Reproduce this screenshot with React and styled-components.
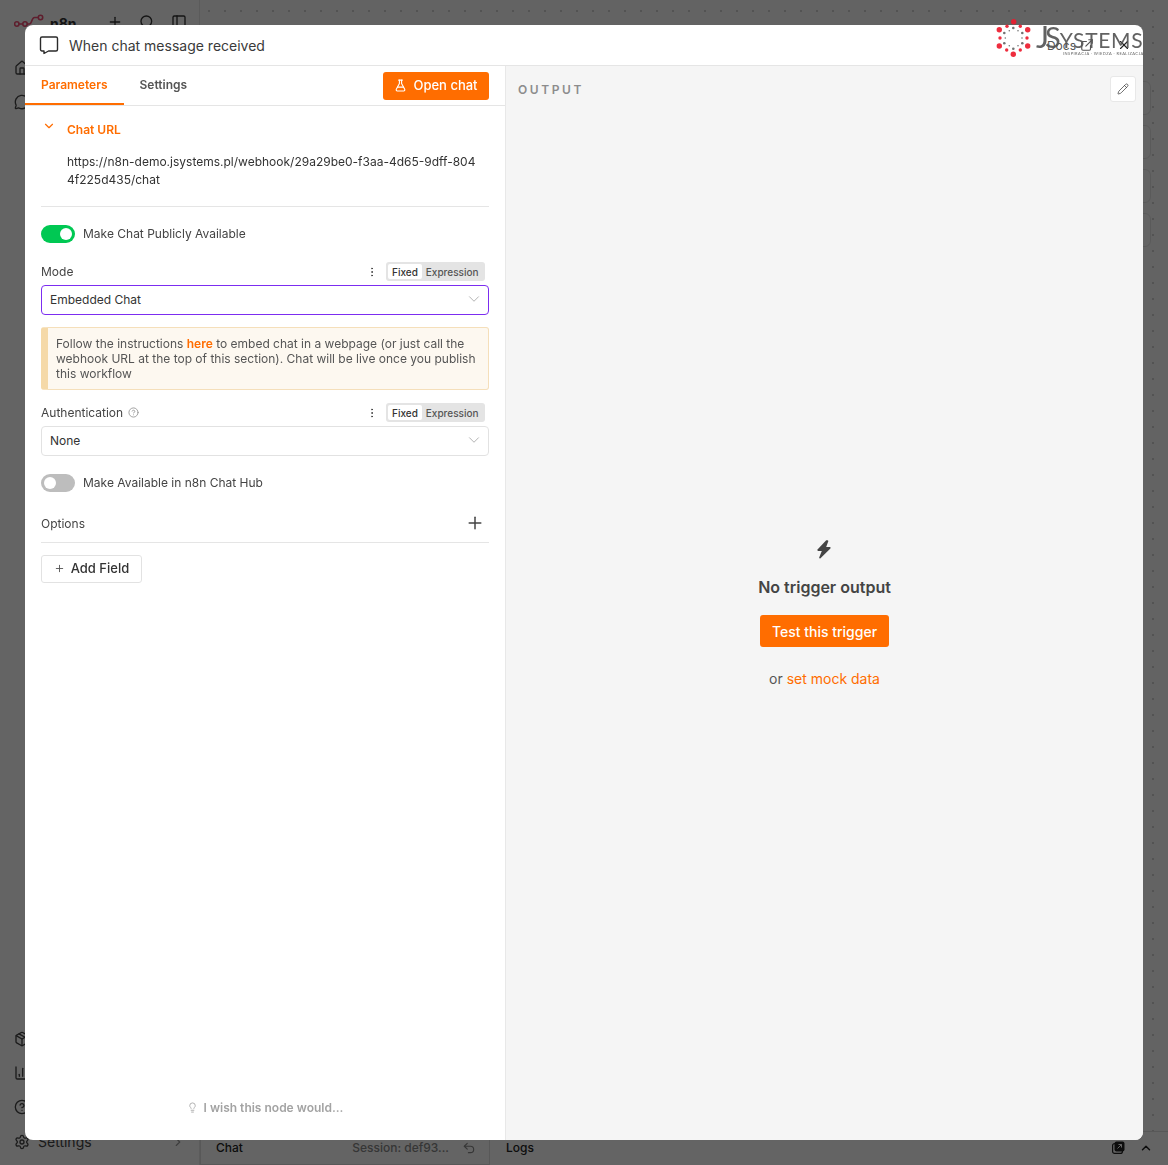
import React from "react";
import styled, { createGlobalStyle } from "styled-components";
import {
  House, MessageCircle, Plus, Search, PanelLeft, Package, ChartColumn, CircleHelp, Settings,
  ChevronRight, ChevronDown, ChevronUp, Undo2, FlaskConical, EllipsisVertical,
  Pencil, Lightbulb, X, ExternalLink
} from "lucide-react";

const Global = createGlobalStyle`
  * { box-sizing: border-box; }
  html, body { margin: 0; height: 100%; }
  body { font-family: Inter, "Noto Sans", sans-serif; color: #222; background: #fafafa; overflow: hidden; }
`;

const Page = styled.div`display: grid; grid-template-columns: 200px 1fr; height: 1165px; overflow: hidden;`;
const Sidebar = styled.aside`display: flex; flex-direction: column; justify-content: space-between; border-right: 1px solid #e4e4e4; padding: 12px 8px 15px 14px;`;
const SideTop = styled.div`display: flex; flex-direction: column;`;
const Brand = styled.div`display: flex; align-items: center; height: 20px; color: #333; margin-bottom: 28px;`;
const BrandName = styled.span`font-size: 14px; font-weight: 700; margin-left: 6px; flex: 1; position: relative; top: 1px;`;
const BrandTools = styled.div`display: flex; gap: 16px; margin-right: 4px; color: #333;`;
const NavList = styled.nav`display: flex; flex-direction: column; gap: 18px; color: #444;`;
const SideBottom = styled.div`display: flex; flex-direction: column; gap: 18px; color: #444;`;
const SettingsRow = styled.div`display: flex; align-items: center; gap: 8px; font-size: 14px; padding-right: 6px;`;
const Grow = styled.span`flex: 1;`;

const Main = styled.main`display: flex; flex-direction: column; min-width: 0;`;
const Canvas = styled.div`
  flex: 1; display: flex; flex-direction: column; align-items: flex-end; gap: 10px; padding: 81px 17px 0 0;
  background-color: #f8f8f8; background-image: radial-gradient(circle, #d0d0d0 1px, transparent 1.2px);
  background-size: 16px 16px; background-position: 1px 3px;
`;
const CanvasTool = styled.div`width: 34px; height: 34px; border: 1px solid #e2e2e2; border-radius: 6px; background: #fafafa;`;
const BottomBar = styled.footer`display: flex; height: 34px; border-top: 1px solid #dcdcdc; background: #fafafa; align-items: stretch;`;
const ChatPane = styled.div`
  width: 290px; display: flex; align-items: center; padding: 0 13px 1px 15px; font-size: 12px; font-weight: 500;
  border-left: 1px solid #dcdcdc; border-right: 1px solid #dcdcdc; border-bottom: 1px solid #dcdcdc; gap: 13px;
`;
const Session = styled.span`margin-left: auto; color: #888; font-weight: 500; white-space: nowrap;`;
const LogsPane = styled.div`flex: 1; display: flex; align-items: center; font-size: 12px; font-weight: 500; padding: 0 15px 2px 16px; gap: 14px;`;

const Overlay = styled.div`position: fixed; inset: 0; background: rgba(0,0,0,.6);`;
const Modal = styled.section`
  position: fixed; left: 25px; top: 25px; width: 1118px; height: 1115px; background: #fff; border-radius: 8px;
  overflow: hidden; display: flex; flex-direction: column;
`;
const ModalHeader = styled.header`height: 41px; flex: none; display: flex; align-items: center; border-bottom: 1px solid #e5e5e5; padding: 0 12px 0 14px;`;
const ModalTitle = styled.h2`margin: 0 0 0 10px; font-size: 14px; font-weight: 400; color: #3a3a3a; flex: 1;`;
const DocsLink = styled.a`display: flex; align-items: center; gap: 4px; font-size: 12px; color: #555; margin-right: 23px;`;
const CloseBtn = styled.span`display: flex; color: #222;`;

const Panes = styled.div`flex: 1; display: flex; min-height: 0;`;
const LeftPane = styled.div`width: 481px; flex: none; display: flex; flex-direction: column; border-right: 1px solid #e8e8e8; padding-bottom: 25px;`;
const RightPane = styled.div`flex: 1; background: #f5f5f5; display: flex; flex-direction: column; position: relative;`;

const TabRow = styled.div`height: 40px; flex: none; display: flex; align-items: stretch; border-bottom: 1px solid #e5e5e5; padding-right: 16px;`;
const Tab = styled.div`
  display: flex; align-items: center; padding: 0 16px; font-size: 12px; font-weight: 600; padding-bottom: 2px;
  color: ${p => (p.$active ? "#ff6d00" : "#555")};
  box-shadow: ${p => (p.$active ? "inset 0 -2px 0 #ff6d00" : "none")};
`;
const OpenChat = styled.button`
  margin-left: auto; align-self: flex-start; margin-top: 6px; height: 28px; width: 106px; border: 0; border-radius: 3px; padding: 0 0 2px;
  background: #ff6d00; color: #fff; font: 500 13px Inter, sans-serif; display: flex; align-items: center; justify-content: center; gap: 6px;
`;
const Form = styled.div`flex: 1; display: flex; flex-direction: column; padding: 0 16px;`;
const CollapseHead = styled.div`display: flex; align-items: flex-start; margin-top: 13px; color: #ff6d00; font-size: 12px; font-weight: 500;`;
const CollapseIcon = styled.span`display: flex; margin: 0 11px 0 1px; height: 14px;`;
const CollapseTitle = styled.span`margin-top: 3px; font-weight: 600;`;
const UrlText = styled.div`margin: 16px 12px 0 26px; font-size: 12px; line-height: 18px; color: #333; word-break: break-all; height: 36px;`;
const Divider = styled.hr`border: 0; border-top: 1px solid #e5e5e5; margin: ${p => p.$m || "0"}; width: 100%;`;
const SwitchRow = styled.div`display: flex; align-items: center; gap: 8px; font-size: 12px; color: #444; margin-top: ${p => p.$mt}px;`;
const SwitchLabel = styled.span`position: relative; top: -1px;`;
const Track = styled.span`
  width: 34px; height: 18px; border-radius: 9px; padding: 3px; display: flex;
  justify-content: ${p => (p.$on ? "flex-end" : "flex-start")};
  background: ${p => (p.$on ? "#00c853" : "#bdbdbd")};
`;
const Knob = styled.span`width: 12px; height: 12px; border-radius: 50%; background: #fff;`;
const LabelRow = styled.div`display: flex; align-items: center; height: 19px; margin-top: ${p => p.$mt}px; font-size: 12px; color: #444; gap: 5px;`;
const LabelActions = styled.div`margin-left: auto; margin-right: 4px; display: flex; align-items: center; gap: 8px; color: #444;`;
const Segment = styled.div`display: flex; padding: 2px; background: #e4e4e4; border-radius: 3px; font-size: 10px; height: 19px; align-items: stretch; width: 99px;`;
const SegOption = styled.span`
  display: flex; align-items: center; padding: ${p => (p.$active ? "0 4px" : "0 0 0 4px")}; border-radius: 2px; color: ${p => (p.$active ? "#333" : "#555")};
  background: ${p => (p.$active ? "#fff" : "transparent")}; font-weight: 500;
`;
const Select = styled.div`
  height: 30px; margin-top: ${p => p.$mt}px; display: flex; align-items: center; justify-content: space-between; padding: 0 5px 2px 8px;
  border-radius: 4px; font-size: 12px; color: #333; background: #fff;
  border: 1px solid ${p => (p.$focus ? "#7c2df0" : "#e2e2e2")};
`;
const Notice = styled.div`
  margin-top: 12px; height: 63px; border: 1px solid #f5dfba; border-left: 7px solid #f5d9a8; background: #fdf8f0; border-radius: 3px;
  padding: 8px 8px 0 8px; font-size: 12px; line-height: 15px; color: #555;
`;
const NoticeLink = styled.a`color: #ff6d00; font-weight: 600;`;
const OptionsRow = styled.div`display: flex; align-items: center; justify-content: space-between; margin-top: 22px; font-size: 12px; color: #444; padding-right: 4px; height: 18px;`;
const AddField = styled.button`
  align-self: flex-start; margin-top: 12px; height: 28px; width: 101px; border: 1px solid #e2e2e2; border-radius: 3px; background: #fff; padding: 0 0 2px;
  display: flex; align-items: center; justify-content: center; gap: 6px; font: 500 13px Inter, sans-serif; color: #333;
`;
const Wish = styled.div`margin-top: auto; display: flex; align-items: center; justify-content: center; gap: 3px; font-size: 12px; font-weight: 600; color: #a3a3a3;`;

const OutputHead = styled.div`padding: 16px 12px 0 12px; font-size: 12px; font-weight: 600; letter-spacing: 2.6px; color: #8c8c8c; line-height: 15px;`;
const EditBtn = styled.button`
  position: absolute; top: 10px; right: 7px; width: 26px; height: 26px; border: 1px solid #e8e8e8; border-radius: 3px; background: #fff;
  display: flex; align-items: center; justify-content: center; padding: 0; color: #333;
`;
const Empty = styled.div`flex: 1; display: flex; flex-direction: column; align-items: center; padding-top: 443px;`;
const EmptyTitle = styled.div`margin-top: 18px; font-size: 16px; font-weight: 600; color: #444; line-height: 20px;`;
const TestBtn = styled.button`
  margin-top: 18px; width: 129px; height: 32px; border: 0; border-radius: 3px; background: #ff6d00; color: #fff; font: 500 14px Inter, sans-serif;
`;
const MockLine = styled.div`margin-top: 23px; font-size: 14px; color: #555; line-height: 17px;`;
const MockLink = styled.a`color: #ff6d00;`;
const BoltSvg = styled.svg`margin-right: 1px; flex: none;`;

const Logo = styled.div`position: fixed; left: 995px; top: 18px; width: 148px; height: 42px; overflow: hidden; opacity: .92; pointer-events: none; display: flex;`;
const LogoMark = styled.svg`width: 38px; height: 42px; flex: none;`;
const LogoText = styled.div`margin-left: 3px; display: flex; flex-direction: column; flex: 1; white-space: nowrap; color: #555;`;
const LogoWord = styled.div`display: flex; align-items: baseline; height: 34px; font-family: Lato, sans-serif; font-weight: 400;`;
const LogoJ = styled.span`font-size: 31px; line-height: 34px; margin-top: 1px; width: 9px;`;
const LogoS = styled.span`font-size: 29px; line-height: 34px; margin-right: -1px;`;
const LogoRest = styled.span`font-size: 21px; line-height: 34px; letter-spacing: .7px;`;
const LogoTag = styled.div`font-size: 4px; line-height: 5px; margin: -1px 0 0 27px; letter-spacing: .45px; font-family: Lato, sans-serif; font-weight: 400;`;

const ChatBubble = () => (
  <svg width="20" height="20" viewBox="0 0 20 20" fill="none" stroke="#2a2a2a" strokeWidth="1.4" strokeLinejoin="round">
    <path d="M3 2h14a1.5 1.5 0 0 1 1.5 1.5v11a1.5 1.5 0 0 1-1.5 1.5H9.5L5 18.5V16H3a1.5 1.5 0 0 1-1.5-1.5v-11A1.5 1.5 0 0 1 3 2z" />
  </svg>
);
const Bolt = () => (
  <BoltSvg width="16" height="19" viewBox="0 0 16 19" fill="#444">
    <path d="M10 .5 1.5 9.5c-.5.6-.1 1.5.7 1.5h3.6l-2.6 6.6c-.2.8.7 1.3 1.3.7l9.9-9.8c.5-.6.2-1.5-.7-1.5h-3.5l2.1-5.7C12.6.3 10.8-.3 10 .5z" />
  </BoltSvg>
);
const N8nMark = () => (
  <svg width="30" height="16" viewBox="0 0 30 16" fill="none" stroke="#ea4b71" strokeWidth="1.6">
    <circle cx="2.8" cy="10" r="2.2" /><circle cx="11" cy="10" r="2.2" /><circle cx="26.5" cy="3.5" r="2.2" /><circle cx="26.5" cy="15" r="2.2" />
    <path d="M5 10h3.8M13.2 10h2.3c2.5 0 2-6.5 5-6.5h3.8" />
  </svg>
);
const PopOut = () => (
  <svg width="13" height="13" viewBox="0 0 13 13">
    <rect x=".6" y="2.6" width="9.8" height="9.8" rx="2" fill="none" stroke="#222" strokeWidth="1.2" />
    <rect x="2.5" y=".5" width="10" height="10" rx="2" fill="#222" />
    <path d="M5.5 7.5 9.5 3.5M6.5 3.5h3v3" fill="none" stroke="#fafafa" strokeWidth="1" />
  </svg>
);
const big = [[18.7,3.7],[18.3,36.3],[4.3,11.7],[32.7,11.7],[4.3,28],[32.7,28]];
const small = [[12,8.3],[25.3,8.3],[5,20],[32,20],[11.7,32],[25.3,32]];
const gray = [[18.3,10],[9.3,15],[27.3,15],[9.3,25.3],[27.3,25.3],[18.3,30.7]];
const tiny = [[14.3,12.7],[23,12.7],[10.3,20],[27,20],[14.3,27.7],[23,27.7]];

const Field = ({ label, help, mt }) => (
  <LabelRow $mt={mt}>
    {label}
    {help && <CircleHelp size={11} color="#999" />}
    <LabelActions>
      <EllipsisVertical size={12} />
      <Segment><SegOption $active>Fixed</SegOption><SegOption>Expression</SegOption></Segment>
    </LabelActions>
  </LabelRow>
);

export default function App() {
  return (
    <>
      <Global />
      <Page>
        <Sidebar>
          <SideTop>
            <Brand>
              <N8nMark />
              <BrandName>n8n</BrandName>
              <BrandTools><Plus size={16} /><Search size={16} /><PanelLeft size={16} /></BrandTools>
            </Brand>
            <NavList><House size={16} /><MessageCircle size={16} /></NavList>
          </SideTop>
          <SideBottom>
            <Package size={16} />
            <ChartColumn size={16} />
            <CircleHelp size={16} />
            <SettingsRow><Settings size={16} />Settings<Grow /><ChevronRight size={14} color="#999" /></SettingsRow>
          </SideBottom>
        </Sidebar>
        <Main>
          <Canvas><CanvasTool /><CanvasTool /><CanvasTool /><CanvasTool /></Canvas>
          <BottomBar>
            <ChatPane>Chat<Session>Session: def93...</Session><Undo2 size={14} color="#888" /></ChatPane>
            <LogsPane>Logs<Grow /><PopOut /><ChevronUp size={14} strokeWidth={2.5} /></LogsPane>
          </BottomBar>
        </Main>
      </Page>
      <Overlay />
      <Modal>
        <ModalHeader>
          <ChatBubble />
          <ModalTitle>When chat message received</ModalTitle>
          <DocsLink>Docs <ExternalLink size={14} /></DocsLink>
          <CloseBtn><X size={14} /></CloseBtn>
        </ModalHeader>
        <Panes>
          <LeftPane>
            <TabRow>
              <Tab $active>Parameters</Tab>
              <Tab>Settings</Tab>
              <OpenChat><FlaskConical size={13} />Open chat</OpenChat>
            </TabRow>
            <Form>
              <CollapseHead>
                <CollapseIcon><ChevronDown size={14} strokeWidth={2} /></CollapseIcon>
                <CollapseTitle>Chat URL</CollapseTitle>
              </CollapseHead>
              <UrlText>https://n8n-demo.jsystems.pl/webhook/29a29be0-f3aa-4d65-9dff-8044f225d435/chat</UrlText>
              <Divider $m="17px 0 0" />
              <SwitchRow $mt={18}><Track $on><Knob /></Track><SwitchLabel>Make Chat Publicly Available</SwitchLabel></SwitchRow>
              <Field label="Mode" mt={19} />
              <Select $focus $mt={4}>Embedded Chat<ChevronDown size={18} color="#aaa" strokeWidth={1.2} /></Select>
              <Notice>
                Follow the instructions <NoticeLink>here</NoticeLink> to embed chat in a webpage (or just call the webhook URL at the top of this section). Chat will be live once you publish this workflow
              </Notice>
              <Field label="Authentication" help mt={13} />
              <Select $mt={4}>None<ChevronDown size={18} color="#aaa" strokeWidth={1.2} /></Select>
              <SwitchRow $mt={18}><Track><Knob /></Track><SwitchLabel>Make Available in n8n Chat Hub</SwitchLabel></SwitchRow>
              <OptionsRow>Options<Plus size={20} color="#444" strokeWidth={1.8} /></OptionsRow>
              <Divider $m="10px 0 0" />
              <AddField><Plus size={11} color="#555" />Add Field</AddField>
              <Wish><Lightbulb size={11} color="#aaa" />&nbsp;I wish this node would...</Wish>
            </Form>
          </LeftPane>
          <RightPane>
            <OutputHead>OUTPUT</OutputHead>
            <EditBtn><Pencil size={12} strokeWidth={1.4} /></EditBtn>
            <Empty>
              <Bolt />
              <EmptyTitle>No trigger output</EmptyTitle>
              <TestBtn>Test this trigger</TestBtn>
              <MockLine>or <MockLink>set mock data</MockLink></MockLine>
            </Empty>
          </RightPane>
        </Panes>
      </Modal>
      <Logo>
        <LogoMark viewBox="0 0 38 42">
          {big.map(([x, y]) => <circle key={`${x}${y}`} cx={x} cy={y} r="2.7" fill="#ed1c2e" />)}
          {small.map(([x, y]) => <circle key={`${x}${y}`} cx={x} cy={y} r="1.7" fill="#ed1c2e" />)}
          {gray.map(([x, y]) => <circle key={`${x}${y}`} cx={x} cy={y} r="1.3" fill="#666" />)}
          {tiny.map(([x, y]) => <circle key={`${x}${y}`} cx={x} cy={y} r=".8" fill="#666" />)}
        </LogoMark>
        <LogoText>
          <LogoWord><LogoJ>J</LogoJ><LogoS>S</LogoS><LogoRest>YSTEMS</LogoRest></LogoWord>
          <LogoTag>INSPIRACJA · WIEDZA · REALIZACJA</LogoTag>
        </LogoText>
      </Logo>
    </>
  );
}
